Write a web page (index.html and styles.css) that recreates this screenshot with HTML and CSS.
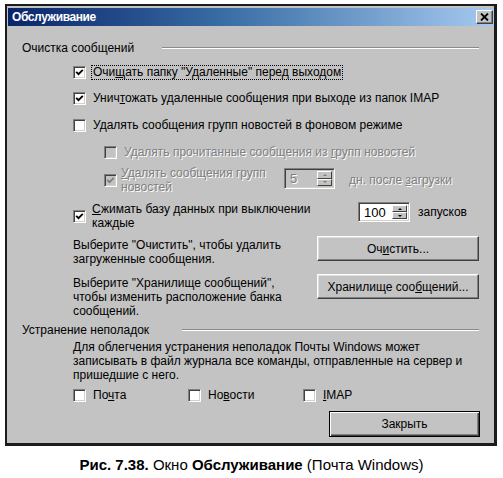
FILE: index.html
```html
<!DOCTYPE html>
<html lang="ru">
<head>
<meta charset="utf-8">
<title>Обслуживание</title>
<link rel="stylesheet" href="styles.css">
</head>
<body>
<div class="window">
  <div class="titlebar">
    <span class="title">Обслуживание</span>
    <span class="close-x"><svg width="9" height="8" viewBox="0 0 9 8"><path d="M1 0.5 L8 7.5 M8 0.5 L1 7.5" stroke="#000" stroke-width="1.8" fill="none"/></svg></span>
  </div>
  <div class="body">
    <div class="group-head"><span class="gh-text">Очистка сообщений</span><span class="rule"></span></div>

    <div class="row cb lvl1 m10">
      <span class="box"><svg width="9" height="9" viewBox="0 0 9 9"><path d="M1.2 3.8 L3.5 6.2 L7.8 1.8" stroke="#000" stroke-width="1.9" fill="none"/></svg></span>
      <span class="lbl focus">Очи<u>щ</u>ать папку "Удаленные" перед выходом</span>
    </div>
    <div class="row cb lvl1 m11">
      <span class="box"><svg width="9" height="9" viewBox="0 0 9 9"><path d="M1.2 3.8 L3.5 6.2 L7.8 1.8" stroke="#000" stroke-width="1.9" fill="none"/></svg></span>
      <span class="lbl">Унич<u>т</u>ожать удаленные сообщения при выходе из папок IMAP</span>
    </div>
    <div class="row cb lvl1 m12">
      <span class="box"></span>
      <span class="lbl">Удалять сообщения групп новостей в фоновом режиме</span>
    </div>
    <div class="row cb lvl2 m12 disabled">
      <span class="box"></span>
      <span class="lbl">Удалять прочитанные сообщения из <u>г</u>рупп новостей</span>
    </div>
    <div class="row cb2 lvl2 m6 disabled">
      <span class="box"><svg width="9" height="9" viewBox="0 0 9 9"><path d="M1.2 3.8 L3.5 6.2 L7.8 1.8" stroke="#808080" stroke-width="1.9" fill="none"/></svg></span>
      <span class="lbl w5"><u>У</u>далять сообщения групп<br>новостей</span>
      <span class="spin s5"><span class="spin-val">5</span><span class="spin-btns"><span class="sb"><i class="up"></i></span><span class="sb"><i class="down"></i></span></span></span>
      <span class="after a5">дн. после <u>з</u>агрузки</span>
    </div>
    <div class="row cb2 lvl1 m8">
      <span class="box"><svg width="9" height="9" viewBox="0 0 9 9"><path d="M1.2 3.8 L3.5 6.2 L7.8 1.8" stroke="#000" stroke-width="1.9" fill="none"/></svg></span>
      <span class="lbl w6"><u>С</u>жимать базу данных при выключении<br>каждые</span>
      <span class="spin-wrap">
        <span class="spin s6"><span class="spin-val">100</span><span class="spin-btns"><span class="sb"><i class="up"></i></span><span class="sb"><i class="down"></i></span></span></span>
        <span class="after a6">запусков</span>
      </span>
    </div>

    <div class="row action m6">
      <p class="desc">Выберите "Очистить", чтобы удалить<br>загруженные сообщения.</p>
      <button class="btn">Оч<u>и</u>стить...</button>
    </div>
    <div class="row action m8">
      <p class="desc">Выберите "Хранилище сообщений",<br>чтобы изменить расположение банка<br>сообщений.</p>
      <button class="btn">Хранилище соо<u>б</u>щений...</button>
    </div>

    <div class="group-head m5"><span class="gh-text wide">Устранение неполадок</span><span class="rule"></span></div>
    <p class="para">Для облегчения устранения неполадок Почты Windows может<br>записывать в файл журнала все команды, отправленные на сервер и<br>пришедшие с него.</p>

    <div class="row log-row m6">
      <span class="log-item"><span class="box"></span><span class="lbl">По<u>ч</u>та</span></span>
      <span class="log-item"><span class="box"></span><span class="lbl">Но<u>в</u>ости</span></span>
      <span class="log-item"><span class="box"></span><span class="lbl"><u>I</u>MAP</span></span>
    </div>

    <div class="row footer m8">
      <button class="btn default">Закрыть</button>
    </div>
  </div>
</div>
<p class="caption"><b>Рис. 7.38.</b> Окно <b>Обслуживание</b> (Почта Windows)</p>
</body>
</html>
```

FILE: styles.css
```css
* { box-sizing: border-box; }
html, body { margin: 0; padding: 0; background: #fff; }
body { font-family: "Liberation Sans", Arial, sans-serif; }

.window {
  margin: 4px 0 0 5px;
  width: 492px;
  background: #c3c3c3;
  border-style: solid;
  border-color: #1c1c1c;
  border-width: 2px 3px 3px 2px;
  padding: 2px 0 0 1px;
}

.titlebar {
  height: 18px;
  background: linear-gradient(to right, #0a246a 0%, #3a6ea5 45%, #a6caf0 100%);
  display: flex;
  align-items: center;
  justify-content: space-between;
  padding: 0 1px 0 4px;
}
.title {
  color: #fff;
  font-weight: bold;
  font-size: 12px;
  letter-spacing: -0.4px;
}
.close-x {
  width: 17px;
  height: 14px;
  background: #c3c3c3;
  border: 1px solid;
  border-color: #fff #404040 #404040 #fff;
  box-shadow: inset -1px -1px #808080;
  display: flex;
  align-items: center;
  justify-content: center;
}

.body {
  padding: 15px 15px 6px 14px;
  font-size: 12px;
  line-height: 14px;
  color: #000;
  display: flex;
  flex-direction: column;
}

.m5 { margin-top: 5px; }
.m6 { margin-top: 6px; }
.m8 { margin-top: 8px; }
.m10 { margin-top: 10px; }
.m11 { margin-top: 11px; }
.m12 { margin-top: 12px; }

.group-head { display: flex; align-items: center; height: 14px; }
.gh-text { width: 140px; flex: none; white-space: nowrap; }
.gh-text.wide { width: 160px; }
.rule {
  flex: 1;
  height: 2px;
  border-top: 1px solid #8a8a8a;
  border-bottom: 1px solid #fff;
}

.row { display: flex; }
.cb { align-items: center; height: 15px; }
.lvl1 { padding-left: 51px; }
.lvl2 { padding-left: 82px; }

.box {
  width: 13px;
  height: 13px;
  flex: none;
  background: #fff;
  border: 1px solid;
  border-color: #808080 #fff #fff #808080;
  box-shadow: inset 1px 1px #404040, inset -1px -1px #d4d0c8;
  display: flex;
  align-items: center;
  justify-content: center;
}
.lbl {
  margin-left: 5px;
  border: 1px dotted transparent;
  padding: 0 1px;
  line-height: 13px;
  white-space: nowrap;
}
.lbl.focus { border-color: #000; }

.disabled .box { background: #c3c3c3; }
.disabled .lbl, .disabled .after, .disabled .spin-val {
  color: #808080;
  text-shadow: 1px 1px 0 #fff;
}

.cb2 { height: 28px; align-items: flex-start; }
.cb2 .box { align-self: center; }
.cb2 .lbl { line-height: 14px; border: 0; padding: 0; margin-left: 4px; margin-top: 0; }
.lvl2.cb2 .lbl { margin-left: 4px; }
.w5 { width: 163px; flex: none; }
.lvl1.cb2 .lbl { margin-left: 6px; }
.w6 { width: 266px; flex: none; }

.spin {
  display: flex;
  background: #fff;
  border: 1px solid;
  border-color: #808080 #fff #fff #808080;
  box-shadow: inset 1px 1px #404040, inset -1px -1px #d4d0c8;
  padding: 2px;
  flex: none;
}
.disabled .spin { background: #c3c3c3; }
.s5 { width: 51px; height: 21px; margin-top: 2px; }
.s6 { width: 52px; height: 20px; }
.spin-val { flex: 1; padding-left: 3px; line-height: 15px; font-size: 13px; }
.s5 .spin-val { line-height: 16px; }
.spin-btns { width: 15px; display: flex; flex-direction: column; }
.sb {
  flex: 1;
  background: #c3c3c3;
  border: 1px solid;
  border-color: #fff #404040 #404040 #fff;
  display: flex;
  align-items: center;
  justify-content: center;
}
.sb i { width: 0; height: 0; border-left: 2px solid transparent; border-right: 2px solid transparent; }
.sb .up { border-bottom: 2px solid #000; }
.sb .down { border-top: 2px solid #000; }
.disabled .sb .up { border-bottom-color: #808080; }
.disabled .sb .down { border-top-color: #808080; }

.after { white-space: nowrap; }
.a5 { margin-left: 14px; align-self: center; }
.spin-wrap { display: flex; align-items: center; }
.a6 { margin-left: 8px; }

.action { justify-content: space-between; padding-left: 51px; align-items: flex-start; }
.desc { margin: 2px 0 0; line-height: 14px; white-space: nowrap; }
.btn {
  width: 162px;
  height: 25px;
  font: inherit;
  font-size: 12px;
  color: #000;
  background: #c3c3c3;
  border: 1px solid;
  border-color: #fff #404040 #404040 #fff;
  box-shadow: inset -1px -1px #808080, inset 1px 1px #dfdfdf;
  padding: 0;
  text-align: center;
}

.para { margin: 3px 0 0; padding-left: 51px; line-height: 14px; white-space: nowrap; }

.log-row { padding-left: 51px; height: 15px; align-items: center; }
.log-item { display: flex; align-items: center; width: 115px; }

.footer { justify-content: flex-end; padding-right: 0; }
.btn.default {
  width: 151px;
  height: 26px;
  border: 1px solid #000;
  box-shadow: inset 1px 1px #fff, inset -1px -1px #404040, inset -2px -2px #808080;
  margin-right: -1px;
}

.caption {
  margin: 10px 0 0;
  width: 503px;
  text-align: center;
  font-family: "Liberation Sans", Arial, sans-serif;
  font-size: 15px;
  line-height: 18px;
  color: #000;
}
```
